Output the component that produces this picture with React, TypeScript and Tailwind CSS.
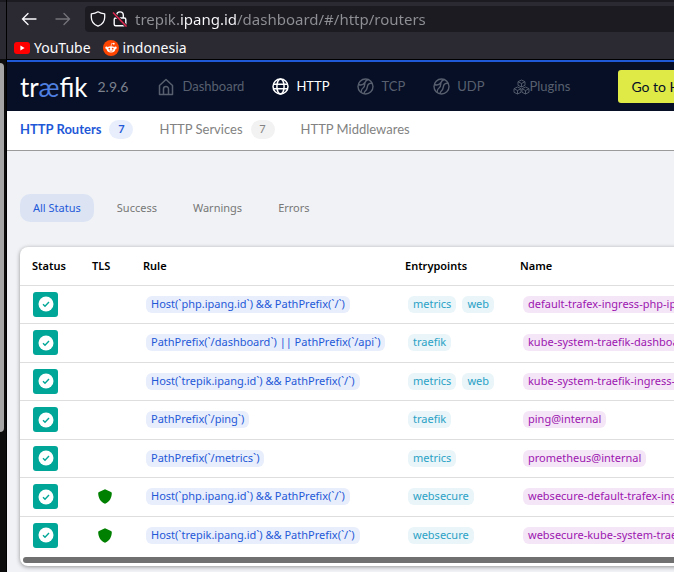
import * as React from "react";
import { clsx } from "clsx";

const NAV = [
  { label: "Dashboard", icon: HomeIcon, gap: "gap-2" },
  { label: "HTTP", icon: GlobeIcon, gap: "gap-[7px]", active: true },
  { label: "TCP", icon: BallIcon, gap: "gap-[7px]" },
  { label: "UDP", icon: BallIcon, gap: "gap-[7px]" },
  { label: "Plugins", icon: CubesIcon, gap: "gap-0" },
];

const TABS = [
  { label: "HTTP Routers", count: 7, active: true },
  { label: "HTTP Services", count: 7 },
  { label: "HTTP Middlewares" },
];

const FILTERS = ["All Status", "Success", "Warnings", "Errors"];

const ROUTERS = [
  {
    rule: "Host(`php.ipang.id`) && PathPrefix(`/`)",
    entrypoints: ["metrics", "web"],
    name: "default-trafex-ingress-php-ipang-id@kubernetes",
  },
  {
    rule: "PathPrefix(`/dashboard`) || PathPrefix(`/api`)",
    entrypoints: ["traefik"],
    name: "kube-system-traefik-dashboard@kubernetescrd",
  },
  {
    rule: "Host(`trepik.ipang.id`) && PathPrefix(`/`)",
    entrypoints: ["metrics", "web"],
    name: "kube-system-traefik-ingress-trepik@kubernetes",
  },
  {
    rule: "PathPrefix(`/ping`)",
    entrypoints: ["traefik"],
    name: "ping@internal",
  },
  {
    rule: "PathPrefix(`/metrics`)",
    entrypoints: ["metrics"],
    name: "prometheus@internal",
  },
  {
    rule: "Host(`php.ipang.id`) && PathPrefix(`/`)",
    entrypoints: ["websecure"],
    name: "websecure-default-trafex-ingress-php@kubernetes",
    tls: true,
  },
  {
    rule: "Host(`trepik.ipang.id`) && PathPrefix(`/`)",
    entrypoints: ["websecure"],
    name: "websecure-kube-system-traefik-ingress@kubernetes",
    tls: true,
  },
];

export default function App() {
  return (
    <div className="flex min-h-screen overflow-hidden bg-[#f0f2f5] font-['Lato','Open_Sans',sans-serif]">
      <WindowEdge />
      <div className="flex min-w-0 flex-1 flex-col overflow-hidden">
        <BrowserChrome />
        <TopNav />
        <TabBar />
        <main className="flex-1 pl-[13px] pt-[43px] font-['Noto_Sans','Open_Sans',sans-serif] text-[11px]">
          <StatusFilter />
          <RouterTable />
        </main>
      </div>
    </div>
  );
}

// Sliver of the window that sits behind the browser
function WindowEdge() {
  return (
    <div className="flex w-[7px] flex-none flex-col border-r border-black bg-[#0c0c0c]">
      <div className="h-[59px] border-t-2 border-[#1c1b22] bg-[#2b2a33]" />
      <div className="mt-1 h-[369px] w-1 rounded-tr-sm rounded-br-sm bg-[#a5a5a5]" />
    </div>
  );
}

function BrowserChrome() {
  return (
    <div className="border-b border-t-2 border-b-black border-t-[#1c1b22] bg-[#2b2a33] font-['Noto_Sans','Open_Sans',sans-serif] text-[#fbfbfe]">
      <div className="flex items-center pl-[14px] pt-1">
        <button type="button" aria-label="Back" className="mr-[18px]">
          <ArrowIcon />
        </button>
        <button type="button" aria-label="Forward" className="mr-[14px] text-[#75747b]">
          <ArrowIcon flip />
        </button>
        <div className="flex h-[26px] flex-1 items-center rounded-l bg-[#1c1b22] pl-[5px]">
          <svg viewBox="0 0 16 16" className="mr-[6px] size-4 flex-none" fill="none" stroke="currentColor" strokeWidth="1.3" strokeLinejoin="round">
            <path d="M8 .8C6.300 2 4 2.700 1.300 2.800v3.400c0 4 2.300 7.200 6.700 9 4.400-1.800 6.700-5 6.700-9V2.800C12 2.700 9.700 2 8 .8Z" />
          </svg>
          <svg viewBox="0 0 16 16" className="mr-[7px] size-4 flex-none" fill="none" stroke="currentColor" strokeWidth="1.4">
            <path d="M4.700 7V4.200a3.300 3.300 0 0 1 6.600 0V7" />
            <rect x="2.200" y="7" width="11.600" height="7.700" rx="1.500" />
            <path d="M1 1.500 14.500 15.500" stroke="#1c1b22" strokeWidth="3" />
            <path d="M1 1.500 14.500 15.500" stroke="#e22850" strokeWidth="1.500" />
          </svg>
          <input
            type="text"
            aria-label="Address"
            defaultValue="trepik.ipang.id/dashboard/#/http/routers"
            className="min-w-0 flex-1 bg-[linear-gradient(to_right,#8f8f96_45px,#fbfbfe_45px,#fbfbfe_102px,#8f8f96_102px)] bg-clip-text text-[15px] leading-5 text-transparent outline-none"
          />
        </div>
      </div>
      <nav className="flex h-[27px] items-center gap-3 pl-[7px] pt-1 text-[14px] leading-5">
        <a href="#youtube" className="flex items-center gap-1">
          <svg viewBox="0 0 16 12" className="h-3 w-4">
            <rect width="16" height="12" rx="3" fill="#f00" />
            <path d="M6.400 3.500v5L10.600 6Z" fill="#fff" />
          </svg>
          YouTube
        </a>
        <a href="#indonesia" className="flex items-center gap-1">
          <svg viewBox="0 0 16 16" className="size-4">
            <circle cx="8" cy="8" r="8" fill="#ff4500" />
            <g fill="#fff">
              <ellipse cx="8" cy="9.300" rx="4.300" ry="3.100" />
              <circle cx="3.500" cy="7.800" r="1.200" />
              <circle cx="12.500" cy="7.800" r="1.200" />
              <circle cx="10.800" cy="3.700" r=".9" />
            </g>
            <path d="m8 6.300.7-3 2 .5" fill="none" stroke="#fff" strokeWidth=".6" />
            <circle cx="6.300" cy="8.700" r=".9" fill="#ff4500" />
            <circle cx="9.700" cy="8.700" r=".9" fill="#ff4500" />
            <path d="M6.200 10.700q1.800 1.200 3.600 0" fill="none" stroke="#ff4500" strokeWidth=".6" />
          </svg>
          indonesia
        </a>
      </nav>
    </div>
  );
}

function TopNav() {
  return (
    <header className="flex h-[51px] items-center border-t-2 border-[#1f59d8] bg-[#060f26] pl-[13px] text-[13px] text-[#58606f]">
      <span className="text-[26px] leading-8 text-white">
        tr<span className="text-[#4f7fe0]">æ</span>fik
      </span>
      <span className="ml-[10px] text-[14px] text-[#7b818d]">2.9.6</span>
      <nav className="ml-[30px] flex flex-none items-center gap-[28px]">
        {NAV.map(({ label, icon: Icon, gap, active }) => (
          <a
            key={label}
            href={`#${label.toLowerCase()}`}
            className={clsx("flex items-center", gap, active && "text-white")}
          >
            <Icon />
            {label}
          </a>
        ))}
      </nav>
      <button
        type="button"
        className="ml-[48px] h-[33px] flex-none whitespace-nowrap rounded-[3px] bg-[#dfea47] px-[13px] text-[14px] text-[#060f26]"
      >
        Go to Hub Dashboard
      </button>
    </header>
  );
}

function TabBar() {
  return (
    <nav className="flex h-10 items-center gap-[26px] border-b border-[#9b9b9b] bg-white pb-[2px] pl-[13px] text-[13px] text-[#828282]">
      {TABS.map((tab) => (
        <a
          key={tab.label}
          href={`#${tab.label}`}
          className={clsx("flex items-center gap-2 whitespace-nowrap", tab.active && "font-bold text-[#1f59d8]")}
        >
          {tab.label}
          {tab.count && (
            <span
              className={clsx(
                "flex h-[19px] w-6 items-center justify-center rounded-full text-[11px]",
                tab.active ? "bg-[#e8eefb]" : "bg-[#f2f2f2]"
              )}
            >
              {tab.count}
            </span>
          )}
        </a>
      ))}
    </nav>
  );
}

function StatusFilter() {
  const [current, setCurrent] = React.useState("All Status");

  return (
    <div className="mb-[25px] flex gap-[10px]">
      {FILTERS.map((f) => (
        <button
          key={f}
          type="button"
          onClick={() => setCurrent(f)}
          className={clsx(
            "h-7 rounded-[10px] px-[13px]",
            f === current ? "bg-[#dce4f4] text-[#1f59d8]" : "text-[#777]"
          )}
        >
          {f}
        </button>
      ))}
    </div>
  );
}

function RouterTable() {
  return (
    <div className="min-w-[900px] rounded-lg bg-white pb-[3px] shadow-[0_1px_4px_rgba(0,0,0,0.4)]">
      <table className="w-full table-fixed text-left">
        <thead>
          <tr className="h-[38px] border-b border-[#dedede] text-black">
            <th className="w-[60px] pl-3 font-semibold">Status</th>
            <th className="w-[51px] pl-3 font-semibold">TLS</th>
            <th className="w-[262px] pl-3 font-semibold">Rule</th>
            <th className="w-[115px] pl-3 font-semibold">Entrypoints</th>
            <th className="pl-3 font-semibold">Name</th>
          </tr>
        </thead>
        <tbody>
          {ROUTERS.map((r) => (
            <tr key={r.name} className="h-[38px] border-b border-[#dedede] last:border-b-0 even:h-[39px]">
              <td className="pl-[13px]">
                <StatusBadge />
              </td>
              <td className="pl-[18px]">{r.tls && <ShieldIcon />}</td>
              <td className="pl-[15px]">
                <Chip className="bg-[#e8eefb] text-[#1f59d8]">{r.rule}</Chip>
              </td>
              <td className="pl-[15px]">
                <div className="flex gap-[6px]">
                  {r.entrypoints.map((e) => (
                    <Chip key={e} className="bg-[#e9f5f9] text-[#2ba2c6]">
                      {e}
                    </Chip>
                  ))}
                </div>
              </td>
              <td className="pl-[15px]">
                <Chip className="bg-[#f5e6f7] text-[#9c16b0]">{r.name}</Chip>
              </td>
            </tr>
          ))}
        </tbody>
      </table>
      {/* horizontal scroll thumb */}
      <div className="ml-[3px] mt-[3px] h-[6px] rounded-full bg-[#707070]" />
    </div>
  );
}

function Chip({ className, children }: { className: string; children: React.ReactNode }) {
  return (
    <span className={clsx("flex h-[17px] w-fit items-center whitespace-nowrap rounded-md px-[5px]", className)}>
      {children}
    </span>
  );
}

function StatusBadge() {
  return (
    <div className="flex size-[25px] items-center justify-center rounded-[3px] bg-[#00a697]">
      <svg viewBox="0 0 16 16" className="size-4" aria-label="Enabled">
        <circle cx="8" cy="8" r="7.500" fill="#fff" />
        <path d="m5 8.200 2 2 4-4.200" fill="none" stroke="#00a697" strokeWidth="1.400" />
      </svg>
    </div>
  );
}

function ShieldIcon() {
  return (
    <svg viewBox="0 0 14 15" className="h-[15px] w-[14px]" aria-label="TLS">
      <path d="M7 .3 13 3q.8.400.8 1.300C13.700 9 11.500 12.800 7.600 14.600q-.6.300-1.200 0C2.500 12.800.3 9 .2 4.300.2 3.400 1 3 1 3Z" fill="green" />
    </svg>
  );
}

function ArrowIcon({ flip }: { flip?: boolean }) {
  return (
    <svg
      viewBox="0 0 16 16"
      className={clsx("size-4", flip && "rotate-180")}
      fill="none"
      stroke="currentColor"
      strokeWidth="1.300"
      strokeLinecap="round"
    >
      <path d="M15 8H1.500M7 2.500 1.500 8 7 13.500" />
    </svg>
  );
}

function HomeIcon() {
  return (
    <svg viewBox="0 0 16 18" className="h-[18px] w-4" fill="none" stroke="currentColor" strokeWidth="1.500" strokeLinejoin="round">
      <path d="M1.500 7.500 8 1.500l6.500 6v9h-13Z" />
      <path d="M5.500 16v-5a2.500 2.500 0 0 1 5 0v5" />
    </svg>
  );
}

function GlobeIcon() {
  return (
    <svg viewBox="0 0 17 17" className="size-[17px]" fill="none" stroke="currentColor" strokeWidth="1.500">
      <circle cx="8.500" cy="8.500" r="7.500" />
      <ellipse cx="8.500" cy="8.500" rx="3.600" ry="7.500" />
      <path d="M1.500 6.300h14M1.500 10.800h14" />
    </svg>
  );
}

function BallIcon() {
  return (
    <svg viewBox="0 0 17 17" className="size-[17px]" fill="none" stroke="currentColor" strokeWidth="1.400">
      <circle cx="8.500" cy="8.500" r="7.500" />
      <path d="M1.500 6.500C4 7.500 6.500 6.500 8 4.500M4 14.500c0-3 1-4 2.500-5C8 8.500 7.500 6 8 4.500 8.500 3 9.500 2 11 1.500" />
      <path d="M7 15.500c.3-2 1.200-2.500 2.200-3.500 1.300-1.500.8-4 2-5.500 1-1.200 2.500-1.500 4-1" />
    </svg>
  );
}

function Cube({ x, y }: { x: number; y: number }) {
  return (
    <path
      transform={`translate(${x} ${y})`}
      d="M4 .5 7.500 2.200v3.600L4 7.500.5 5.800V2.200ZM.5 2.200 4 4l3.500-1.800M4 4v3.500"
    />
  );
}

function CubesIcon() {
  return (
    <svg viewBox="0 0 17 16" className="h-4 w-[17px]" fill="none" stroke="currentColor" strokeWidth=".9" strokeLinejoin="round">
      <Cube x={4.5} y={0.5} />
      <Cube x={0.5} y={7.5} />
      <Cube x={8.5} y={7.5} />
    </svg>
  );
}
